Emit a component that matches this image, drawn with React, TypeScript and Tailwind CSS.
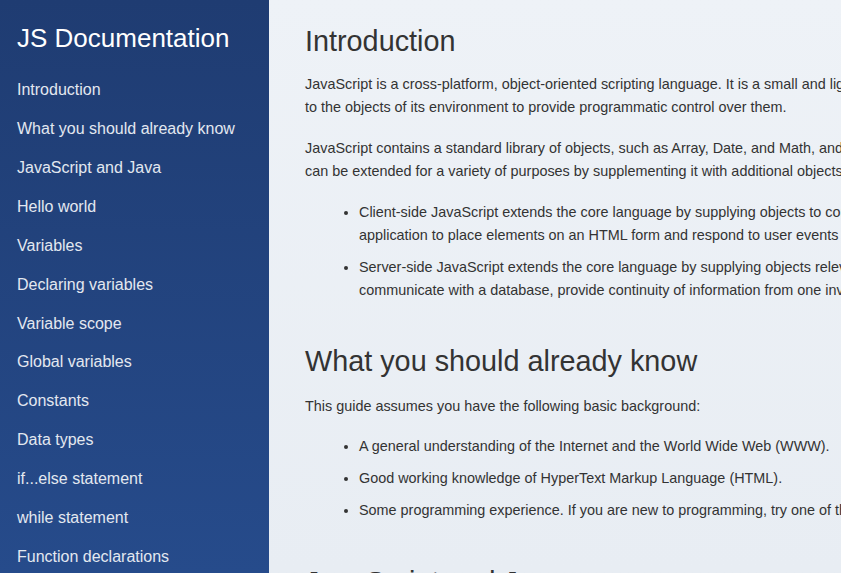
import React from 'react';

const navItems = [
  'Introduction',
  'What you should already know',
  'JavaScript and Java',
  'Hello world',
  'Variables',
  'Declaring variables',
  'Variable scope',
  'Global variables',
  'Constants',
  'Data types',
  'if...else statement',
  'while statement',
  'Function declarations',
  'Reference',
];

type Block =
  | { kind: 'p'; lines: string[] }
  | { kind: 'ul'; items: string[][] };

const sections: { title: string; blocks: Block[] }[] = [
  {
    title: 'Introduction',
    blocks: [
      {
        kind: 'p',
        lines: [
          'JavaScript is a cross-platform, object-oriented scripting language. It is a small and lightweight language. Inside a host environment (for example, a web browser), JavaScript can be connected',
          'to the objects of its environment to provide programmatic control over them.',
        ],
      },
      {
        kind: 'p',
        lines: [
          'JavaScript contains a standard library of objects, such as Array, Date, and Math, and a core set of language elements such as operators, control structures, and statements. Core JavaScript',
          'can be extended for a variety of purposes by supplementing it with additional objects; for example:',
        ],
      },
      {
        kind: 'ul',
        items: [
          [
            'Client-side JavaScript extends the core language by supplying objects to control a browser and its Document Object Model (DOM). For example, client-side extensions allow an',
            'application to place elements on an HTML form and respond to user events such as mouse clicks, form input, and page navigation.',
          ],
          [
            'Server-side JavaScript extends the core language by supplying objects relevant to running JavaScript on a server. For example, server-side extensions allow an application to',
            'communicate with a database, provide continuity of information from one invocation to another of the application, or perform file manipulations on a server.',
          ],
        ],
      },
    ],
  },
  {
    title: 'What you should already know',
    blocks: [
      { kind: 'p', lines: ['This guide assumes you have the following basic background:'] },
      {
        kind: 'ul',
        items: [
          ['A general understanding of the Internet and the World Wide Web (WWW).'],
          ['Good working knowledge of HyperText Markup Language (HTML).'],
          ['Some programming experience. If you are new to programming, try one of the tutorials linked on the main page about JavaScript.'],
        ],
      },
    ],
  },
  {
    title: 'JavaScript and Java',
    blocks: [
      {
        kind: 'p',
        lines: ['JavaScript and Java are similar in some ways but fundamentally different in some others.'],
      },
    ],
  },
];

function Lines({ lines }: { lines: string[] }) {
  return (
    <>
      {lines.map((l, i) => (
        <React.Fragment key={i}>
          {i > 0 && <br />}
          {l}
        </React.Fragment>
      ))}
    </>
  );
}

export default function App() {
  return (
    <div className="flex h-screen overflow-hidden font-['Liberation_Sans',Arial,sans-serif]">
      <nav className="w-[269px] shrink-0 h-full overflow-hidden bg-gradient-to-b from-[#1f3c72] to-[#264b8b] pl-[17px] pt-[23px]">
        <h1 className="text-[26px] leading-[31px] text-white">JS Documentation</h1>
        <ul className="mt-[17px]">
          {navItems.map(item => (
            <li key={item} className="text-[16px] leading-[38.92px] text-[#e3e8f0] whitespace-nowrap">
              {item}
            </li>
          ))}
        </ul>
      </nav>

      <main className="flex-1 min-w-0 h-full overflow-hidden bg-gradient-to-b from-[#eef2f7] to-[#e8edf3] pl-[36px] pt-[24px] text-[#333]">
        {sections.map((s, si) => (
          <section key={s.title} className={si === 1 ? 'mt-[42px]' : si === 2 ? 'mt-[43px]' : ''}>
            <h2 className={`text-[28.8px] leading-[34.56px] whitespace-nowrap ${si > 0 ? 'mb-[16px]' : 'mb-[14.4px]'}`}>{s.title}</h2>
            {s.blocks.map((b, bi) =>
              b.kind === 'p' ? (
                <p key={bi} className={`text-[14.4px] leading-[23px] whitespace-nowrap ${si > 0 ? 'mb-[17px]' : 'mb-[18px]'}`}>
                  <Lines lines={b.lines} />
                </p>
              ) : (
                <ul key={bi} className="list-disc pl-[54px] mb-[18px] flex flex-col gap-[9px]">
                  {b.items.map((it, ii) => (
                    <li key={ii} className="text-[14.4px] leading-[23px] whitespace-nowrap">
                      <Lines lines={it} />
                    </li>
                  ))}
                </ul>
              )
            )}
          </section>
        ))}
      </main>
    </div>
  );
}
